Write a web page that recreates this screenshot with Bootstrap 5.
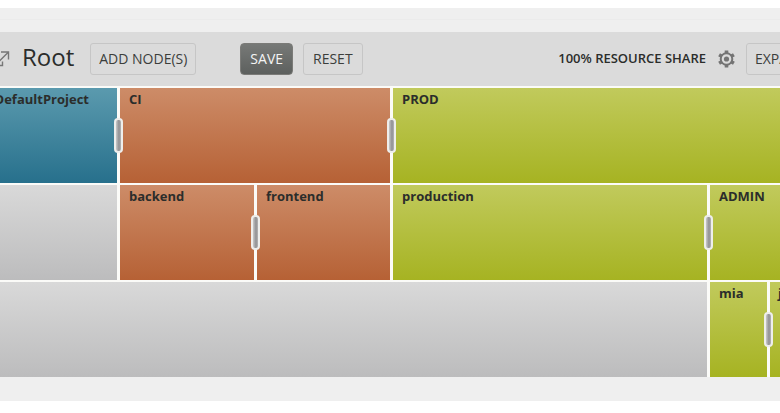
<!DOCTYPE html>
<html lang="en">
<head>
<meta charset="utf-8">
<meta name="viewport" content="width=device-width, initial-scale=1">
<title>Resource shares</title>
<link href="https://cdn.jsdelivr.net/npm/bootstrap@5.3.0/dist/css/bootstrap.min.css" rel="stylesheet">
<style>
body { font-family: "Open Sans", "Noto Sans", sans-serif; font-size: 14px; color: #2b2d2b; background: #fff; padding: 8px 0 12px; }
.panel-strip { height: 12px; border-bottom: 1px solid #ebebeb; }
.panel { background: #efefef; }
.toolbar { height: 54px; background: #dbdbdb; margin-top: 12px; color: #2b2d2b; }
.root-title { font-size: 24px; line-height: 32px; margin: 0 16px 4px 11px; }
.tool-btn { --bs-btn-font-size: 14px; --bs-btn-line-height: 20px; --bs-btn-padding-x: 8px; --bs-btn-padding-y: 5px; --bs-btn-border-radius: 3px; --bs-btn-color: #3c3e3c; --bs-btn-border-color: #c6c6c6; --bs-btn-hover-border-color: #999; white-space: nowrap; }
.save-btn { --bs-btn-color: #f4f4f4; --bs-btn-hover-color: #fff; --bs-btn-border-color: #7b7b78; --bs-btn-border-radius: 4px; background: linear-gradient(#777977, #5d605e); margin-left: 44px; margin-right: 10px; }
.roomy-btn { --bs-btn-padding-x: 9px; }
.open-btn { width: 11px; height: 18px; }
.gear-btn { margin: 0 11px 0 12px; }
.edge-clip { width: 34px; }
.share-label { font-weight: 600; font-size: 13px; }
.tree { grid-template-columns: minmax(0,117fr) minmax(0,134fr) minmax(0,133fr) minmax(0,314fr) minmax(0,57fr) minmax(0,10fr); grid-auto-rows: 95px; gap: 2px 3px; background: #fbfbf8; padding-top: 2px; }
.node { font-size: 13px; line-height: 18px; font-weight: 700; padding: 2px 9px; white-space: nowrap; }
.node-teal { background: linear-gradient(#5b9aae, #27708c); }
.node-rust { background: linear-gradient(#cd8c68, #b66135); }
.node-lime { background: linear-gradient(#c1ca5c, #a6b322); }
.node-none { background: linear-gradient(#d9d9d9, #bcbcbd); }
.default-node { padding-right: 28px; }
.edge-node { padding-left: 8px; padding-right: 0; }
.span-2 { grid-column: span 2; }
.span-3 { grid-column: span 3; }
.span-4 { grid-column: span 4; }
.grip { width: 9px; height: 35px; top: 30px; right: -6px; z-index: 2; border: 2px solid #eeeeec; border-radius: 4px; background: linear-gradient(90deg, #c9c9c9, #8f8f92 60%, #b5b5b5); cursor: col-resize; }
.panel-foot { height: 24px; }
</style>
<script src="https://cdn.jsdelivr.net/npm/bootstrap@5.3.0/dist/js/bootstrap.bundle.min.js"></script>
</head>
<body>
<main class="panel overflow-hidden">
  <div class="panel-strip"></div>
  <header class="toolbar d-flex align-items-center">
    <button class="open-btn btn p-0 border-0 d-flex flex-shrink-0" type="button" aria-label="Open root">
      <svg width="11" height="18" viewBox="0 0 11 18" fill="none" stroke="#777" stroke-width="1.400"><path d="M-1 11.500 8 2.500M1 2h7.500v7.500M-3 15.500h5.500v-4"/></svg>
    </button>
    <h1 class="root-title fw-normal">Root</h1>
    <button class="btn tool-btn" type="button">ADD NODE(S)</button>
    <button class="btn tool-btn roomy-btn save-btn" type="button">SAVE</button>
    <button class="btn tool-btn roomy-btn" type="button">RESET</button>
    <span class="share-label ms-auto text-nowrap">100% RESOURCE SHARE</span>
    <button class="gear-btn btn p-0 border-0 d-flex" type="button" aria-label="Share settings">
      <svg width="17" height="18" viewBox="0 0 17 18" fill="none" stroke="#747474"><circle cx="8.500" cy="9" r="5.800" stroke-width="2"/><circle cx="8.500" cy="9" r="2.600" fill="#747474" stroke="none"/><path stroke-width="3.600" d="M8.500 .5v3M8.500 14.500v3M1.100 4.700l2.600 1.500M13.300 11.800l2.600 1.500M15.900 4.700l-2.600 1.500M3.700 11.800l-2.600 1.500"/></svg>
    </button>
    <div class="edge-clip overflow-hidden flex-shrink-0"><button class="btn tool-btn" type="button">EXPAND</button></div>
  </header>
  <section class="tree d-grid" aria-label="Resource tree">
    <div class="node node-teal default-node position-relative d-flex justify-content-end">DefaultProject<span class="grip position-absolute"></span></div>
    <div class="node node-rust span-2 position-relative">CI<span class="grip position-absolute"></span></div>
    <div class="node node-lime span-3">PROD</div>

    <div class="node node-none"></div>
    <div class="node node-rust position-relative">backend<span class="grip position-absolute"></span></div>
    <div class="node node-rust">frontend</div>
    <div class="node node-lime position-relative">production<span class="grip position-absolute"></span></div>
    <div class="node node-lime span-2">ADMIN</div>

    <div class="node node-none span-4"></div>
    <div class="node node-lime position-relative">mia<span class="grip position-absolute"></span></div>
    <div class="node node-lime edge-node">j</div>
  </section>
  <div class="panel-foot"></div>
</main>
</body>
</html>
